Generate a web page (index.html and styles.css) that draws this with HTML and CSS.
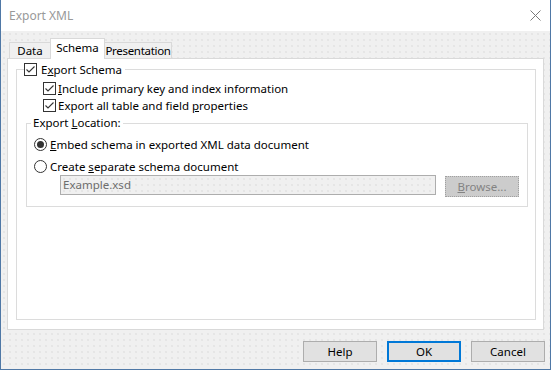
FILE: index.html
```html
<!DOCTYPE html>
<html>
<head>
<meta charset="utf-8">
<link rel="stylesheet" href="styles.css">
</head>
<body>
<div class="window">
  <div class="titlebar">
    <span class="title">Export XML</span>
    <svg class="close" width="11" height="11" viewBox="0 0 11 11"><path d="M0.5 0.5 L10.5 10.5 M10.5 0.5 L0.5 10.5" stroke="#7a7a7a" stroke-width="1" fill="none"/></svg>
  </div>
  <div class="body">
    <div class="tabs">
      <div class="tab tab-data">Data</div>
      <div class="tab tab-schema selected">Schema</div>
      <div class="tab tab-pres">Presentation</div>
    </div>
    <div class="panel">
      <fieldset class="group schema">
        <legend class="schema-legend">
          <span class="cb"><svg width="11" height="11" viewBox="0 0 11 11"><path d="M1.5 5.5 L4 8 L9.5 2.5" stroke="#333" stroke-width="1.1" fill="none"/></svg></span>
          <span>E<u>x</u>port Schema</span>
        </legend>
        <div class="row sub first">
          <span class="cb"><svg width="11" height="11" viewBox="0 0 11 11"><path d="M1.5 5.5 L4 8 L9.5 2.5" stroke="#333" stroke-width="1.1" fill="none"/></svg></span>
          <span><u>I</u>nclude primary key and index information</span>
        </div>
        <div class="row sub">
          <span class="cb"><svg width="11" height="11" viewBox="0 0 11 11"><path d="M1.5 5.5 L4 8 L9.5 2.5" stroke="#333" stroke-width="1.1" fill="none"/></svg></span>
          <span>Export all table and field <u>p</u>roperties</span>
        </div>
        <fieldset class="group loc">
          <legend class="loc-legend">Export <u>L</u>ocation:</legend>
          <div class="row radio-row first">
            <span class="radio checked"></span>
            <span><u>E</u>mbed schema in exported XML data document</span>
          </div>
          <div class="row radio-row second">
            <span class="radio"></span>
            <span>Create <u>s</u>eparate schema document</span>
          </div>
          <div class="file-row">
            <div class="textbox">Example.xsd</div>
            <div class="browse"><u>B</u>rowse...</div>
          </div>
        </fieldset>
      </fieldset>
    </div>
    <div class="buttons">
      <div class="btn">Help</div>
      <div class="btn default">OK</div>
      <div class="btn">Cancel</div>
    </div>
  </div>
</div>
</body>
</html>
```

FILE: styles.css
```css
html, body {
  margin: 0;
  padding: 0;
  background: #ffffff;
}

body {
  font-family: "Noto Sans", "Liberation Sans", sans-serif;
  font-size: 11.5px;
  color: #000;
}

u {
  text-decoration: underline;
  text-underline-offset: 1px;
}

.window {
  width: 551px;
  height: 370px;
  box-sizing: border-box;
  border: 1px solid #4f78a6;
  border-top: 0;
  display: flex;
  flex-direction: column;
}

.titlebar {
  height: 31px;
  flex: none;
  background: #ffffff;
  display: flex;
  align-items: center;
  justify-content: space-between;
  padding: 0 9px 0 8px;
}

.title {
  color: #999999;
  font-size: 12px;
  margin-top: -1px;
}

.close {
  display: block;
  margin-top: -1px;
}

.body {
  flex: 1;
  display: flex;
  flex-direction: column;
  padding: 7px 6px 0 6px;
  background-color: #f0f0f0;
  background-image: radial-gradient(circle, #e2e2e2 0.6px, transparent 1px);
  background-size: 6px 6px;
}

.tabs {
  display: flex;
  align-items: flex-end;
  height: 20px;
  margin-left: 2px;
}

.tab {
  box-sizing: border-box;
  height: 16px;
  border: 1px solid #d9d9d9;
  border-bottom: 0;
  background: #f0f0f0;
  line-height: 15px;
  margin-left: -1px;
  white-space: nowrap;
  display: flex;
  justify-content: center;
}

.tab-data {
  width: 42px;
  margin-left: 0;
}

.tab-schema {
  width: 55px;
}

.tab-pres {
  width: 68px;
  letter-spacing: -0.3px;
}

.tab.selected {
  height: 21px;
  background: #ffffff;
  margin-bottom: -1px;
  position: relative;
  z-index: 1;
  line-height: 17px;
}

.panel {
  box-sizing: border-box;
  height: 272px;
  border: 1px solid #d9d9d9;
  background: #ffffff;
  display: flex;
  flex-direction: column;
  padding: 4px 7px 9px 8px;
}

.group {
  margin: 0;
  padding: 0;
  border: 1px solid #dcdcdc;
  min-width: 0;
}

.schema {
  flex: 1;
}

.schema-legend {
  margin-left: 7px;
  padding: 0 3px 0 0;
  display: flex;
  align-items: center;
  height: 13px;
  line-height: 13px;
}

.schema-legend .cb {
  margin-right: 4px;
}

.cb {
  box-sizing: border-box;
  width: 13px;
  height: 13px;
  border: 1px solid #333333;
  background: #ffffff;
  display: inline-flex;
  align-items: center;
  justify-content: center;
  flex: none;
}

.cb svg {
  display: block;
}

.row {
  display: flex;
  align-items: center;
  white-space: nowrap;
}

.sub {
  height: 17px;
  margin-left: 26px;
}

.sub.first {
  margin-top: 4px;
}

.sub .cb {
  margin-right: 2px;
}

.loc {
  margin: 2px 7px 0 9px;
  padding: 0 0 9px 4px;
}

.loc-legend {
  padding: 0 2px;
  height: 14px;
  line-height: 14px;
}

.radio-row {
  height: 15px;
  margin-left: 3px;
}

.radio-row.first {
  margin-top: 7px;
}

.radio-row.second {
  margin-top: 7px;
}

.radio {
  box-sizing: border-box;
  width: 13px;
  height: 13px;
  border: 1px solid #333333;
  border-radius: 50%;
  background: #ffffff;
  margin-right: 3px;
  display: flex;
  align-items: center;
  justify-content: center;
  flex: none;
}

.radio.checked::after {
  content: "";
  width: 7px;
  height: 7px;
  border-radius: 50%;
  background: #333333;
}

.file-row {
  display: flex;
  align-items: flex-start;
  margin: 1px 8px 0 29px;
}

.textbox {
  flex: 1;
  box-sizing: border-box;
  height: 20px;
  border: 1px solid #adadad;
  background-color: #f0f0f0;
  background-image: radial-gradient(circle, #e2e2e2 0.6px, transparent 1px);
  background-size: 6px 6px;
  color: #6d6d6d;
  line-height: 18px;
  padding-left: 2px;
}

.browse {
  box-sizing: border-box;
  width: 74px;
  height: 21px;
  margin: 1px 0 0 9px;
  border: 1px dotted #a0a0a0;
  background: #cccccc;
  color: #838383;
  text-align: center;
  line-height: 19px;
}

.buttons {
  display: flex;
  justify-content: flex-end;
  gap: 10px;
  margin: 11px -1px 0 0;
}

.btn {
  box-sizing: border-box;
  width: 74px;
  height: 21px;
  border: 1px solid #adadad;
  background: #e1e1e1;
  text-align: center;
  line-height: 19px;
}

.btn.default {
  border: 2px solid #0078d7;
  line-height: 17px;
}
```
